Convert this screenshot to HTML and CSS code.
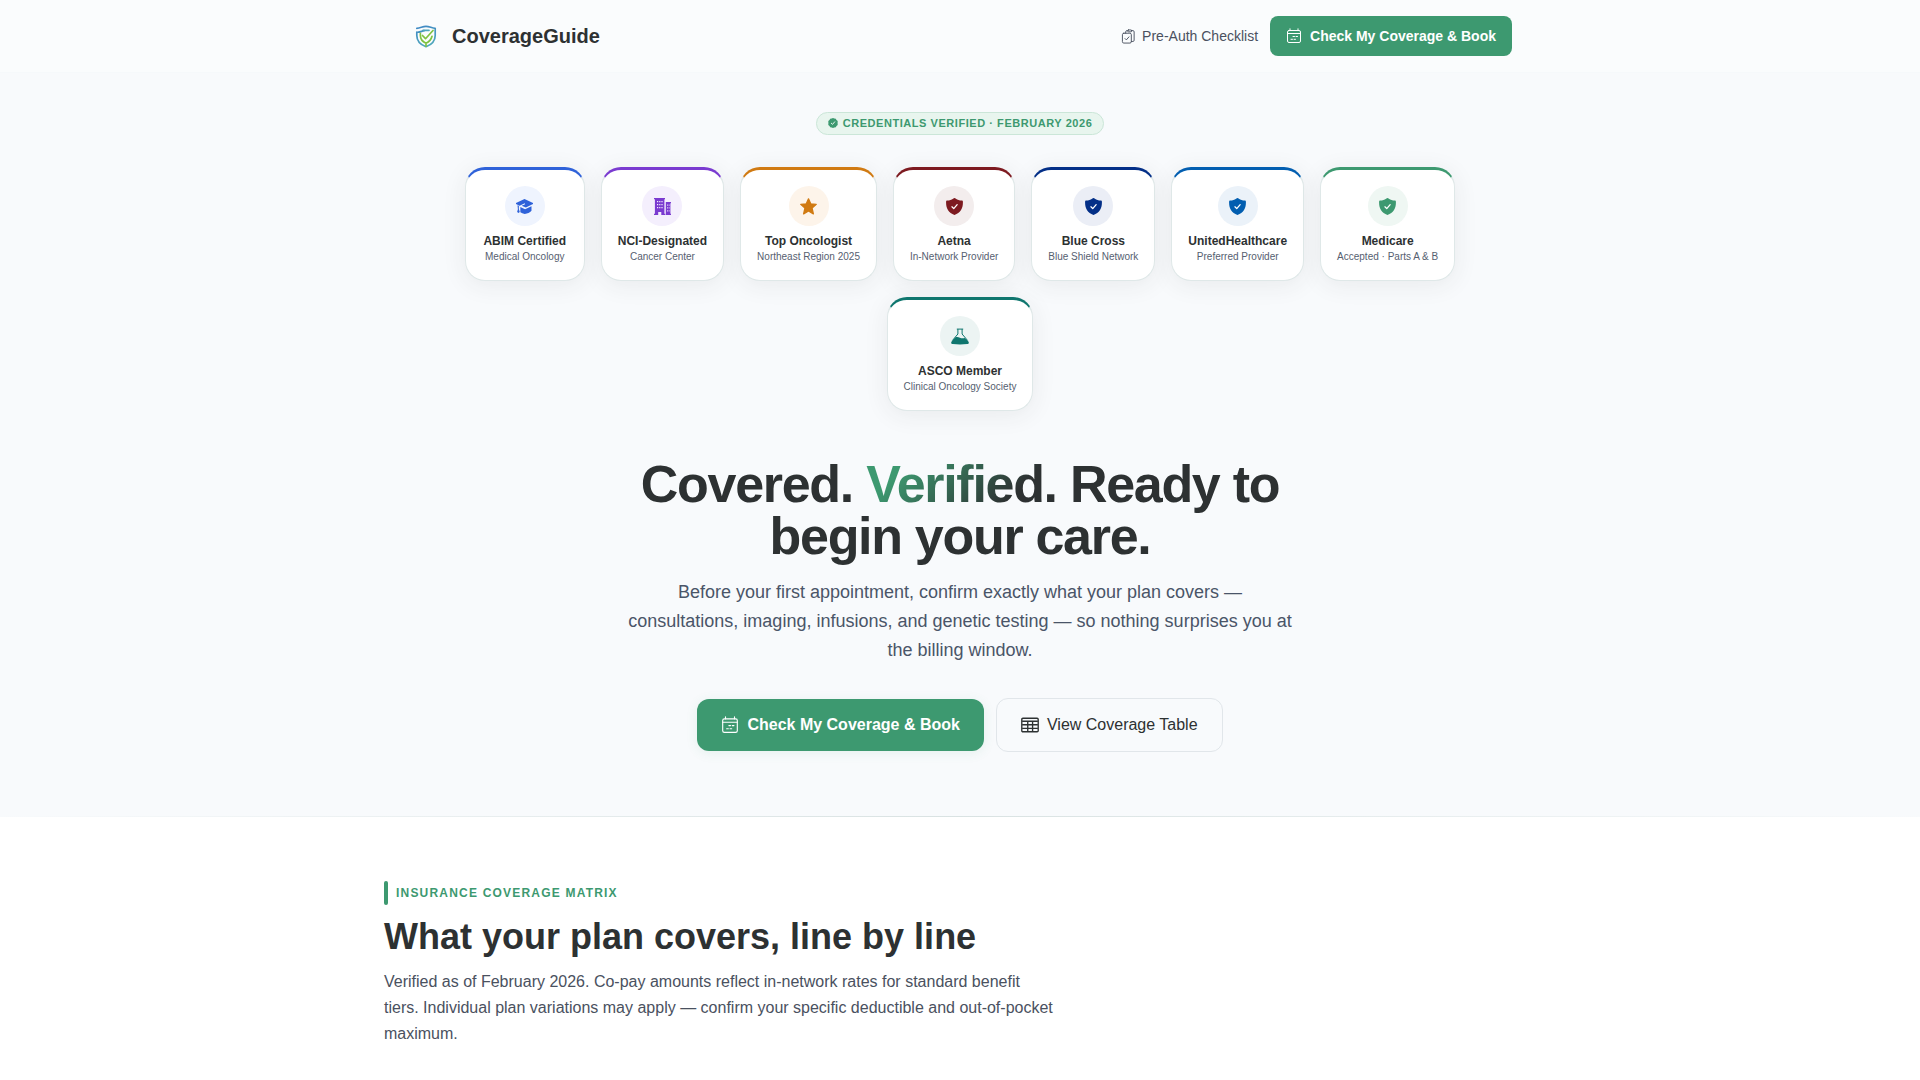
FILE: index.html
```html
<!DOCTYPE html>
<html lang="en">
<head>
    <meta charset="UTF-8">
    <meta name="viewport" content="width=device-width, initial-scale=1.0">
    <title>CoverageGuide</title>
    <link rel="stylesheet" href="styles.css">
</head>
<body>
    <!-- shared icons -->
    <svg class="sprite" aria-hidden="true">
        <symbol id="calendar" viewBox="0 0 16 16">
            <g fill="none" stroke="currentColor" stroke-linecap="round" stroke-linejoin="round">
                <rect x="1.5" y="2.5" width="13" height="12" rx="1.5"/>
                <path d="M4 .8v1.7M12 .8v1.7M1.5 5.5h13M7 8.500h1.500M10 8.500h1.500M5 11.300h1.500M8 11.300h1.500"/>
            </g>
        </symbol>
        <symbol id="shield" viewBox="0 0 16 16">
            <path fill="currentColor" d="M8 0c.5 0 .8.3 1.300.6C10.900 1.600 12.600 2.200 14.800 2.300c.7 0 1.100.4 1.100 1C16.200 9.500 13.800 13.900 8 16 2.200 13.900-.2 9.500.1 3.300c0-.6.4-1 1.100-1C3.400 2.200 5.100 1.600 6.700.6 7.200.3 7.500 0 8 0z"/>
            <path fill="none" stroke="#fff" stroke-width="1.200" stroke-linecap="round" stroke-linejoin="round" d="M5.600 8.300l1.700 1.700 3.200-3.700"/>
        </symbol>
    </svg>

    <header class="site-header">
        <div class="header-inner">
            <a class="logo" href="#">
                <svg class="logo-icon" viewBox="0 0 36 36" aria-hidden="true">
                    <defs>
                        <linearGradient id="logoGradient" x1="0" y1="0" x2="0.3" y2="1">
                            <stop offset="0" stop-color="#3f88c5"/>
                            <stop offset="1" stop-color="#4fa6bc"/>
                        </linearGradient>
                    </defs>
                    <g fill="none" stroke-width="1.700" stroke-linecap="round" stroke-linejoin="round">
                        <path stroke="url(#logoGradient)" d="M8.800 10.300c3.600 0 5.600-2 9.200-2s5.800 2 9.200 2v7.100c0 5.600-3.600 9.200-9.200 11.300-5.600-2.100-9.200-5.700-9.200-11.300v-3.200c2.800.3 4.600-.9 7.400-1.500"/>
                        <path stroke="#7fc241" d="M24 18.300c-.8 3.300-2.800 5.600-6 6.900-3.600-1.500-5.600-4-5.600-7.600v-2.200M18 25.200v3"/>
                        <path stroke="#7fc241" d="M14.500 17.500l3 3.200 7.500-8.200"/>
                        <path stroke="#4fa6bc" d="M15 12.300h6"/>
                    </g>
                </svg>
                <span>CoverageGuide</span>
            </a>
            <nav class="header-nav">
                <a class="nav-link" href="#checklist">
                    <svg class="icon-sm" viewBox="0 0 16 16" fill="none" stroke="currentColor" stroke-linecap="round" stroke-linejoin="round" aria-hidden="true">
                        <path d="M5 4.500V3c0-.8.500-1.300 1.300-1.300h.5M11 1.700h1.700c.8 0 1.300.5 1.300 1.300v9c0 .8-.5 1.300-1.300 1.300H11"/>
                        <rect x="7" y="1" width="4.500" height="2" rx="1"/>
                        <rect x="1.500" y="4.500" width="9.500" height="10.500" rx="1.500"/>
                        <path d="M4.300 10.200l1.400 1.400 2.800-3.200"/>
                    </svg>
                    Pre-Auth Checklist
                </a>
                <button class="btn btn-small" type="button">
                    <svg class="icon" aria-hidden="true"><use href="#calendar"/></svg>
                    Check My Coverage &amp; Book
                </button>
            </nav>
        </div>
    </header>

    <main>
        <section class="hero">
            <div class="verified">
                <svg class="verified-icon" viewBox="0 0 10 10" aria-hidden="true">
                    <path fill="currentColor" d="M5 0l1.300.5 1.500.2.7 1.200 1.200 1.100L9.600 5l.1 2-1.200 1.100-.7 1.200-1.500.2L5 10l-1.300-.5-1.500-.2-.7-1.200L.3 7 .4 5 .3 3l1.200-1.100.7-1.200 1.500-.2z"/>
                    <path fill="none" stroke="#e8f5ee" stroke-linecap="round" stroke-linejoin="round" d="M3.300 5.200l1.200 1.200 2.200-2.600"/>
                </svg>
                Credentials Verified · February 2026
            </div>

            <div class="badges">
                <div class="badge-card abim">
                    <div class="badge-icon">
                        <svg viewBox="0 0 18 16" fill="currentColor" aria-hidden="true">
                            <path d="M9 0l9 4.300v1L10.500 9 6 7.300l3.700-1.800-.5-1L3.800 7.200 0 5.300v-1z"/>
                            <path d="M4.600 8.600l5 2.300 6.800-3.200v4.900c-1.800 2-4.200 3-7.100 3.300-1.900-.2-3.500-.8-4.700-1.700z"/>
                            <path d="M1.600 6.600L3 7.300v3.400l1 3.100-1.400 1.200-1.400-1.200.8-3z"/>
                        </svg>
                    </div>
                    <div class="badge-name">ABIM Certified</div>
                    <div class="badge-sub">Medical Oncology</div>
                </div>
                <div class="badge-card nci">
                    <div class="badge-icon">
                        <svg viewBox="0 0 17 17" fill="currentColor" fill-rule="evenodd" aria-hidden="true">
                            <path d="M0 0h11v1.200h-.6V15.800h.9V17H7.300v-3H4.200v3H0v-1.200h.9V1.200H0zM3 3v1.200h1.200V3zM5.200 3v1.200h1.200V3zM7.400 3v1.200h1.200V3zM3 6v1.200h1.200V6zM5.200 6v1.200h1.200V6zM7.400 6v1.200h1.200V6zM3 9v1.200h1.200V9zM5.200 9v1.200h1.200V9zM7.400 9v1.200h1.200V9z"/>
                            <path d="M11.800 4H17v1.200h-.6v10.600h.6V17h-5.200zM13 6.500v1.200h.8V6.500zM14.700 6.500v1.200h.8V6.500zM13 9.300v1.200h.8V9.300zM14.700 9.300v1.200h.8V9.300zM13 12.200v1.200h.8v-1.200zM14.700 12.200v1.200h.8v-1.200z"/>
                        </svg>
                    </div>
                    <div class="badge-name">NCI-Designated</div>
                    <div class="badge-sub">Cancer Center</div>
                </div>
                <div class="badge-card top">
                    <div class="badge-icon">
                        <svg viewBox="0 0 16 16" fill="currentColor" stroke="currentColor" stroke-width="1.200" stroke-linejoin="round" aria-hidden="true">
                            <path d="M8 .8l2.100 4.700 5.200.5-3.900 3.500 1.200 5.500L8 12.200 3.400 15l1.200-5.500L.7 6l5.200-.5z"/>
                        </svg>
                    </div>
                    <div class="badge-name">Top Oncologist</div>
                    <div class="badge-sub">Northeast Region 2025</div>
                </div>
                <div class="badge-card aetna">
                    <div class="badge-icon"><svg aria-hidden="true"><use href="#shield"/></svg></div>
                    <div class="badge-name">Aetna</div>
                    <div class="badge-sub">In-Network Provider</div>
                </div>
                <div class="badge-card bluecross">
                    <div class="badge-icon"><svg aria-hidden="true"><use href="#shield"/></svg></div>
                    <div class="badge-name">Blue Cross</div>
                    <div class="badge-sub">Blue Shield Network</div>
                </div>
                <div class="badge-card united">
                    <div class="badge-icon"><svg aria-hidden="true"><use href="#shield"/></svg></div>
                    <div class="badge-name">UnitedHealthcare</div>
                    <div class="badge-sub">Preferred Provider</div>
                </div>
                <div class="badge-card medicare">
                    <div class="badge-icon"><svg aria-hidden="true"><use href="#shield"/></svg></div>
                    <div class="badge-name">Medicare</div>
                    <div class="badge-sub">Accepted · Parts A &amp; B</div>
                </div>
                <div class="badge-card asco">
                    <div class="badge-icon">
                        <svg class="flask" viewBox="0 0 18 16" aria-hidden="true">
                            <path fill="none" stroke="currentColor" stroke-linejoin="round" d="M5.800.6h6.400M6.900.6v4.900L1.400 12M11.100.6v4.900l5.500 6.500"/>
                            <path fill="currentColor" d="M4.200 8.900c1.800-.9 3.200-.4 4.700.3 1.700.8 3 .7 4.800.3l3.500 3.200c1.200 1.500.6 2.700-1 2.900-4.800.5-9.600.5-14.400 0-1.600-.2-2.200-1.400-1-2.900z"/>
                        </svg>
                    </div>
                    <div class="badge-name">ASCO Member</div>
                    <div class="badge-sub">Clinical Oncology Society</div>
                </div>
            </div>

            <h1>Covered. <span class="gradient-text">Verified.</span> Ready to begin your care.</h1>
            <p class="hero-text">Before your first appointment, confirm exactly what your plan covers — consultations, imaging, infusions, and genetic testing — so nothing surprises you at the billing window.</p>

            <div class="hero-actions">
                <button class="btn btn-large" type="button">
                    <svg class="icon" aria-hidden="true"><use href="#calendar"/></svg>
                    Check My Coverage &amp; Book
                </button>
                <a class="btn btn-large btn-outline" href="#coverage">
                    <svg class="icon" viewBox="0 0 16 16" fill="none" stroke="currentColor" stroke-width="1.200" aria-hidden="true">
                        <rect x=".7" y="2" width="14.600" height="12" rx="1"/>
                        <path d="M1 4.700h14M1 7.800h14M1 11h14M6 4.700v9.300M10.300 4.700v9.300"/>
                    </svg>
                    View Coverage Table
                </a>
            </div>
        </section>

        <section class="coverage" id="coverage">
            <div class="coverage-inner">
                <div class="section-label">Insurance Coverage Matrix</div>
                <h2>What your plan covers, line by line</h2>
                <p>Verified as of February 2026. Co-pay amounts reflect in-network rates for standard benefit tiers. Individual plan variations may apply — confirm your specific deductible and out-of-pocket maximum.</p>
            </div>
        </section>
    </main>
</body>
</html>
```
FILE: styles.css
```css
* {
    box-sizing: border-box;
}
body {
    font-family: "Liberation Sans", Arial, sans-serif;
    background-color: #fff;
    color: #2d3132;
    margin: 0;
}
a {
    color: inherit;
    text-decoration: none;
}
.sprite {
    display: none;
}
.icon {
    width: 16px;
    height: 16px;
    flex-shrink: 0;
}
.icon-sm {
    width: 15px;
    height: 15px;
    flex-shrink: 0;
}

/* Header */
.site-header {
    background: #fafcfd;
    border-bottom: 1px solid #f6f9fb;
}
.header-inner {
    max-width: 1200px;
    margin: 0 auto;
    padding: 16px 48px;
    display: flex;
    align-items: center;
    justify-content: space-between;
}
.logo {
    display: flex;
    align-items: center;
    gap: 8px;
    font-size: 20px;
    font-weight: bold;
}
.logo-icon {
    width: 36px;
    height: 36px;
}
.header-nav {
    display: flex;
    align-items: center;
    gap: 12px;
}
.nav-link {
    display: flex;
    align-items: center;
    gap: 6px;
    font-size: 14px;
    color: #4a5160;
}

/* Buttons */
.btn {
    display: inline-flex;
    align-items: center;
    gap: 8px;
    font-family: inherit;
    font-weight: bold;
    color: #fff;
    background: #3d9970;
    border: none;
    cursor: pointer;
}
.btn:hover {
    background: #348461;
}
.btn-small {
    height: 40px;
    padding: 0 16px;
    font-size: 14px;
    border-radius: 8px;
}
.btn-large {
    height: 52px;
    padding: 0 24px;
    font-size: 16px;
    border-radius: 12px;
    box-shadow: 0 2px 12px rgba(61, 153, 112, 0.1);
}
.btn-large .icon {
    width: 18px;
    height: 18px;
}
.btn-outline {
    height: 54px;
    font-weight: normal;
    color: #2d3132;
    background: transparent;
    border: 1px solid #e1e6ea;
    box-shadow: none;
}
.btn-outline:hover {
    background: #fff;
}

/* Hero */
.hero {
    display: flex;
    flex-direction: column;
    align-items: center;
    padding: 39px 24px 64px;
    background: #f8fafc;
    border-bottom: 1px solid;
    border-image: linear-gradient(90deg, #f8fafc, #d9e2e2, #f8fafc) 1;
    text-align: center;
}
.verified {
    display: flex;
    align-items: center;
    gap: 5px;
    height: 23px;
    padding: 0 11px 1px;
    font-size: 11px;
    font-weight: bold;
    letter-spacing: 0.05em;
    text-transform: uppercase;
    color: #3d9970;
    background: #e8f5ee;
    border: 1px solid #cbe6d8;
    border-radius: 20px;
}
.verified-icon {
    width: 10px;
    height: 10px;
}
.badges {
    display: flex;
    flex-wrap: wrap;
    justify-content: center;
    gap: 16px;
    max-width: 1100px;
    margin-top: 32px;
}
.badge-card {
    display: flex;
    flex-direction: column;
    align-items: center;
    min-width: 120px;
    padding: 16px;
    background: #fff;
    border: 1px solid #dfe8e8;
    border-top: 3px solid var(--accent);
    border-radius: 20px;
    box-shadow: 0 4px 24px rgba(45, 49, 50, 0.08);
}
.badge-icon {
    display: flex;
    align-items: center;
    justify-content: center;
    width: 40px;
    height: 40px;
    margin-bottom: 8px;
    border-radius: 50%;
    color: var(--accent);
    background: var(--tint);
}
.badge-icon svg {
    width: 17px;
    height: 17px;
}
.badge-icon .flask {
    width: 18px;
}
.badge-name {
    font-size: 12px;
    font-weight: bold;
    line-height: 15px;
}
.badge-sub {
    font-size: 10px;
    line-height: 15px;
    color: #566070;
}
.abim {
    --accent: #2f62d9;
    --tint: #eff4fe;
}
.nci {
    --accent: #7a3bd0;
    --tint: #f4effd;
}
.top {
    --accent: #d07a12;
    --tint: #fdf4ea;
}
.aetna {
    --accent: #7d1a20;
    --tint: #f3eded;
}
.bluecross {
    --accent: #032f87;
    --tint: #ebeef6;
}
.united {
    --accent: #025eb0;
    --tint: #ebf2f9;
}
.medicare {
    --accent: #3d9970;
    --tint: #eff7f3;
}
.asco {
    --accent: #0f766e;
    --tint: #ecf4f3;
}
h1 {
    max-width: 720px;
    margin: 47px 0 16px;
    font-size: 52px;
    line-height: 52px;
    letter-spacing: -0.025em;
}
.gradient-text {
    color: transparent;
    background: linear-gradient(135deg, #3d9970 20%, #2d3132 75%);
    -webkit-background-clip: text;
    background-clip: text;
}
.hero-text {
    max-width: 672px;
    margin: 0;
    font-size: 18px;
    line-height: 29px;
    color: #4a5568;
}
.hero-actions {
    display: flex;
    flex-wrap: wrap;
    align-items: center;
    justify-content: center;
    gap: 12px;
    margin-top: 33px;
}

/* Coverage matrix */
.coverage-inner {
    max-width: 1200px;
    margin: 0 auto;
    padding: 64px 24px;
}
.section-label {
    display: flex;
    align-items: center;
    gap: 8px;
    font-size: 12px;
    font-weight: bold;
    letter-spacing: 0.1em;
    text-transform: uppercase;
    color: #3d9970;
}
.section-label::before {
    content: "";
    width: 4px;
    height: 24px;
    background: #3d9970;
    border-radius: 2px;
}
h2 {
    margin: 12px 0;
    font-size: 36px;
    line-height: 40px;
}
.coverage-inner p {
    max-width: 672px;
    margin: 0;
    font-size: 16px;
    line-height: 26px;
    color: #4a5160;
}

@media (max-width: 768px) {
    .header-inner {
        padding: 16px;
    }
    .nav-link {
        display: none;
    }
    h1 {
        font-size: 36px;
        line-height: 40px;
    }
}
```
